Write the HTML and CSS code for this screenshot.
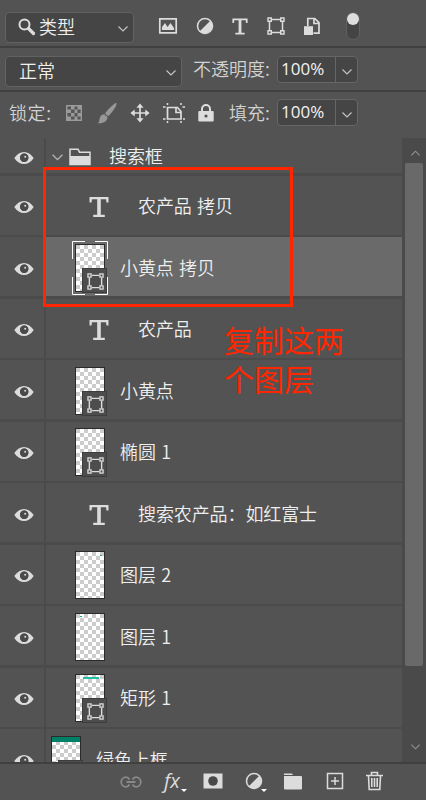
FILE: index.html
```html
<!DOCTYPE html>
<html lang="zh-CN">
<head>
<meta charset="utf-8">
<title>图层</title>
<link rel="stylesheet" href="styles.css">
</head>
<body>
<svg class="defs" width="0" height="0">
  <symbol id="eye" viewBox="0 0 20 14"><path fill="#dcdcdc" fill-rule="evenodd" d="M.3 7C3 3 6.300 1 10 1s7 2 9.700 6C17 11 13.700 13 10 13S3 11 .3 7Zm5.700-.3a4.200 4.200 0 1 0 8.400 0 4.200 4.200 0 1 0-8.400 0Z"/><circle cx="10.200" cy="6.800" r="4.200" fill="#4a4a4a"/><circle cx="11.200" cy="5.700" r="1" fill="#ddd"/></symbol>
  <symbol id="type" viewBox="0 0 20 20"><path fill="#dcdcdc" d="M.5 0h19v5.500h-2L17 2.300h-5.200v15.500h4V20H4.200v-2.200h4V2.300H3L2.500 5.500h-2Z"/></symbol>
  <symbol id="shape" viewBox="0 0 18 18"><g fill="none" stroke="#dcdcdc"><path stroke-width="1.500" d="M5 2.500h8M5 15.500h8M2.500 5v8M15.500 5v8"/><path stroke-width="1.400" d="M1 1h3.300v3.300H1zM13.700 1H17v3.300h-3.300zM1 13.700h3.300V17H1zM13.700 13.700H17V17h-3.300z"/></g></symbol>
  <symbol id="half" viewBox="0 0 18 18"><circle cx="9" cy="9" r="7.500" fill="none" stroke="#d8d8d8" stroke-width="1.600"/><path fill="#dcdcdc" d="M14.500 3.500A7.800 7.800 0 0 1 3.500 14.500Z"/></symbol>
  <symbol id="chev" viewBox="0 0 12 8"><path d="M1.500 1.500 6 6l4.500-4.500" fill="none" stroke="currentColor" stroke-width="1.200"/></symbol>
</svg>

<div class="panel">
  <div class="bar filter">
    <div class="select kind">
      <svg class="search" viewBox="0 0 18 18"><circle cx="6.500" cy="6.500" r="5" fill="none" stroke="#dcdcdc" stroke-width="2"/><path d="m10.500 10.500 5 5" stroke="#dcdcdc" stroke-width="3.200" stroke-linecap="round"/></svg>
      <span>类型</span><svg class="chev"><use href="#chev"/></svg>
    </div>
    <div class="filters">
      <svg class="i20" viewBox="0 0 20 20"><path d="M1.800 2.800h16.400v14H1.800z" fill="none" stroke="#dcdcdc" stroke-width="1.700"/><path d="M4 14v-3l3-4 2.500 4 3-4L16 12v2Z" fill="#dcdcdc"/></svg>
      <svg class="i18"><use href="#half"/></svg>
      <svg class="t16"><use href="#type"/></svg>
      <svg class="i18"><use href="#shape"/></svg>
      <svg class="i18" viewBox="0 0 18 18"><path d="M4.800 9V1.500h7L16 5.700v10.500h-5.500M11 2v4.500h5" fill="none" stroke="#dcdcdc" stroke-width="1.700"/><path d="M1 9.200h9V18H1z" fill="#dcdcdc"/></svg>
    </div>
    <div class="toggle"><i></i></div>
  </div>

  <div class="bar blend">
    <div class="select mode"><span>正常</span><svg class="chev"><use href="#chev"/></svg></div>
    <span class="label opacity">不透明度:</span>
    <div class="number"><b>100%</b><i><svg class="chev"><use href="#chev"/></svg></i></div>
  </div>

  <div class="bar locks">
    <span class="label lock">锁定:</span>
    <div class="lockicons">
      <svg class="i18" viewBox="0 0 18 18"><path d="M1.700 1.700h14.600v14.600H1.700z" fill="#555" stroke="#9a9a9a" stroke-width="1.400"/><path fill="#9a9a9a" d="M6 2h3.500v3.500H6zM12.500 2H16v3.500h-3.500zM2 5.500h4V9H2zM9.500 5.500h3V9h-3zM6 9h3.500v3.500H6zM12.500 9H16v3.500h-3.500zM2 12.500h4V16H2zM9.500 12.500h3V16h-3z"/></svg>
      <svg class="i22" viewBox="0 0 22 22"><path fill="#989898" d="M20.500.7c.6 3-4.500 10-8.200 13.500L9 11.500C12 7.500 17.500 1.600 20.500.7ZM8.200 12.300l3.300 2.800c.2 4-4 6.700-10 6.200 2.500-1.300 1.500-3.500 2.500-6 .7-2 2.500-3 4.200-3Z"/></svg>
      <svg class="i20" viewBox="0 0 20 20"><path d="M10 3v14M3 10h14" stroke="#ddd" stroke-width="1.700"/><path fill="#ddd" d="m10 .4 3.600 4.300H6.400ZM10 19.600l3.600-4.300H6.400ZM.4 10l4.300-3.600v7.200ZM19.600 10l-4.300-3.600v7.200Z"/></svg>
      <svg class="i22" viewBox="0 0 22 20"><path d="M4.500 4.500h10l3.500 4v7.500H4.500ZM13 4.500v5h5" fill="none" stroke="#ddd" stroke-width="1.700"/><path d="M4.500 0v2M4.500 18v2M18 0v2M18 18v2M0 4h2.500M0 16h2.500M19.500 4H22M20 16h2" stroke="#ddd" stroke-width="1.500"/></svg>
      <svg class="i18" viewBox="0 0 18 18"><path d="M5 8V5a4 4 0 0 1 8 0v3" fill="none" stroke="#ddd" stroke-width="2"/><rect x="1.300" y="7" width="15.400" height="10.500" rx="1" fill="#ddd"/><circle cx="9" cy="12" r="1.600" fill="#505050"/></svg>
    </div>
    <span class="label fill">填充:</span>
    <div class="number"><b>100%</b><i><svg class="chev"><use href="#chev"/></svg></i></div>
  </div>

  <div class="body">
    <div class="layers">
      <div class="row group"><div class="vis"><svg><use href="#eye"/></svg></div><div class="cell"><svg class="open"><use href="#chev"/></svg><svg class="folder" viewBox="0 0 22 18"><path d="M1 16.500V1.200h8l1.500 3h10.500v12.300Z" fill="none" stroke="#dcdcdc" stroke-width="1.500"/><path d="M1 8h20v8.800H1z" fill="#dcdcdc"/></svg><span class="name">搜索框</span></div></div>
      <div class="row"><div class="vis"><svg><use href="#eye"/></svg></div><div class="cell text"><svg><use href="#type"/></svg><span class="name">农产品 拷贝</span></div></div>
      <div class="row selected"><div class="vis"><svg><use href="#eye"/></svg></div><div class="cell"><div class="thumb"><svg class="corners" viewBox="0 0 36 54"><path d="M.5 18V.5H13M23 .5h12.500V18M35.500 36v17.500H23M13 53.500H.5V36" fill="none" stroke="#fff"/></svg><div class="badge"><svg><use href="#shape"/></svg></div></div><span class="name">小黄点 拷贝</span></div></div>
      <div class="row"><div class="vis"><svg><use href="#eye"/></svg></div><div class="cell text"><svg><use href="#type"/></svg><span class="name">农产品</span></div></div>
      <div class="row"><div class="vis"><svg><use href="#eye"/></svg></div><div class="cell"><div class="thumb"><div class="badge"><svg><use href="#shape"/></svg></div></div><span class="name">小黄点</span></div></div>
      <div class="row"><div class="vis"><svg><use href="#eye"/></svg></div><div class="cell"><div class="thumb"><i class="ink dot"></i><div class="badge"><svg><use href="#shape"/></svg></div></div><span class="name">椭圆 1</span></div></div>
      <div class="row"><div class="vis"><svg><use href="#eye"/></svg></div><div class="cell text"><svg><use href="#type"/></svg><span class="name">搜索农产品：如红富士</span></div></div>
      <div class="row"><div class="vis"><svg><use href="#eye"/></svg></div><div class="cell"><div class="thumb"><i class="ink right"></i></div><span class="name">图层 2</span></div></div>
      <div class="row"><div class="vis"><svg><use href="#eye"/></svg></div><div class="cell"><div class="thumb"><i class="ink left"></i></div><span class="name">图层 1</span></div></div>
      <div class="row"><div class="vis"><svg><use href="#eye"/></svg></div><div class="cell"><div class="thumb"><i class="ink strip"></i><div class="badge"><svg><use href="#shape"/></svg></div></div><span class="name">矩形 1</span></div></div>
      <div class="row"><div class="vis"><svg><use href="#eye"/></svg></div><div class="cell outer"><div class="thumb"><i class="ink banner"></i><div class="badge"><svg><use href="#shape"/></svg></div></div><span class="name">绿色上框</span></div></div>
    </div>
    <div class="scroll"><svg class="up"><use href="#chev"/></svg><div class="handle"></div><svg class="down"><use href="#chev"/></svg></div>
  </div>

  <div class="footer">
    <svg class="link" viewBox="0 0 22 12"><path d="M9.500 3.500C8.500 1.800 7.500 1.200 6 1.200a4.800 4.800 0 0 0 0 9.600c1.500 0 2.500-.6 3.500-2.300M12.500 3.500c1-1.700 2-2.300 3.500-2.300a4.800 4.800 0 0 1 0 9.600c-1.500 0-2.500-.6-3.500-2.300M6.500 6h9" fill="none" stroke="#8a8a8a" stroke-width="1.800"/></svg>
    <span class="fx">fx<i class="more"></i></span>
    <svg class="mask" viewBox="0 0 20 16"><path d="M.5.500h19v15H.5z" fill="#dcdcdc"/><circle cx="10" cy="8" r="4.800" fill="#4a4a4a"/></svg>
    <span class="adjust"><svg class="i18"><use href="#half"/></svg><i class="more"></i></span>
    <svg class="dir" viewBox="0 0 18 17"><path fill="#dcdcdc" d="M0 .5h8l1 1.500H0zM0 3h17q1 0 1 1v11.500q0 1-1 1H1q-1 0-1-1z"/></svg>
    <svg class="i18 add" viewBox="0 0 18 18"><path d="M1.500 1.500h15v15h-15zM9 5v8M5 9h8" fill="none" stroke="#dcdcdc" stroke-width="1.500"/></svg>
    <svg class="trash" viewBox="0 0 17 20"><path d="M0 4.500h17M5.500 4V1.500h6V4M2.500 5l.7 13.500h10.600L14.500 5M5.800 7v9M8.500 7v9M11.200 7v9" fill="none" stroke="#dcdcdc" stroke-width="1.600"/></svg>
  </div>

  <div class="frame"></div>
  <div class="note">复制这两<br>个图层</div>
</div>
</body>
</html>
```
FILE: styles.css
```css
* { box-sizing: border-box; }
body {
  margin: 0;
  background: #535353;
  color: #efefef;
  font: 350 18px/24px "Noto Sans CJK SC", "Noto Sans", sans-serif;
}
.defs { position: absolute; }
svg { display: block; flex: none; overflow: visible; }
i, b { font-style: normal; font-weight: 400; }
.panel {
  position: relative;
  display: flex;
  flex-direction: column;
  width: 426px;
  height: 800px;
  overflow: hidden;
  background: #535353;
}
.i18 { width: 18px; height: 18px; }
.i20 { width: 20px; height: 20px; }
.i22 { width: 22px; height: 22px; }
.t16 { width: 16px; height: 17px; }
.chev { width: 12px; height: 8px; color: #c4c4c4; }

/* option bars */
.bar { display: flex; flex: none; align-items: flex-start; white-space: nowrap; }
.filter { height: 48px; padding: 12px 0 0 5px; border-bottom: 2px solid #404040; }
.blend { height: 44px; padding: 8px 0 0 5px; border-bottom: 2px solid #404040; }
.locks { height: 46px; padding: 7px 0 0 10px; }
.select {
  display: flex;
  align-items: center;
  height: 31px;
  background: #454545;
  border: 1px solid #626262;
  border-radius: 4px;
}
.select .chev { margin: 3px 4px 0 auto; }
.kind { width: 129px; padding-left: 12px; }
.kind span { margin: -3px 0 0 3px; }
.search { width: 18px; height: 18px; margin-top: -1px; }
.mode { width: 177px; padding-left: 13px; }
.mode span { margin-top: -3px; }
.filters {
  display: flex;
  align-items: center;
  justify-content: space-between;
  width: 164px;
  height: 28px;
  margin-left: 24px;
}
.filters .i18, .filters .t16 { margin-left: -2px; margin-right: 1px; }
.toggle {
  width: 14px;
  height: 28px;
  margin: 0 0 0 24px;
  background: #444;
  border: 1px solid #606060;
  border-radius: 7px;
}
.toggle i { display: block; width: 12px; height: 12px; border-radius: 50%; background: #dedede; }
.label { color: #d2d2d2; }
.opacity { margin-left: 11px; width: 84px; }
.locks .label { margin-top: 1px; }
.lock { width: 56px; margin-left: -1px; letter-spacing: .6px; }
.lockicons {
  display: flex;
  align-items: center;
  justify-content: space-between;
  width: 150px;
  height: 28px;
}
.fill { width: 48px; margin-left: 14px; }
.number {
  display: flex;
  width: 81px;
  height: 27px;
  background: #454545;
  border: 1px solid #666;
  border-radius: 4px;
}
.number b { width: 57px; padding-left: 3px; font: 17px/24px "Open Sans", sans-serif; color: #f2f2f2; }
.number i { display: flex; flex: 1; align-items: center; justify-content: center; padding-top: 4px; border-left: 1px solid #666; }

/* layer list */
.body { display: flex; flex: none; height: 624px; overflow: hidden; }
.layers { width: 402px; }
.row { display: flex; height: 61px; border-bottom: 2px solid #4b4b4b; }
.row:nth-child(odd) { height: 62px; border-bottom-width: 3px; }
.row.group { height: 38px; }
.vis { width: 46px; padding: 24px 0 0 14px; border-right: 2px solid #4b4b4b; }
.row:nth-child(odd) .vis { padding-top: 25px; }
.row.group .vis { padding-top: 13px; }
.vis svg { width: 20px; height: 14px; margin-left: -.5px; }
.cell { display: flex; flex: 1; align-items: flex-start; padding: 6px 0 0 29px; }
.row:nth-child(odd) .cell { padding-top: 7px; }
.name { margin: 11px 0 0 15px; white-space: nowrap; word-spacing: 1.500px; letter-spacing: -.1px; }
.cell.text { padding-left: 43px; }
.text > svg { width: 20px; height: 20px; margin-top: 15px; }
.text .name { margin-left: 29px; }
.cell.outer { padding-left: 5px; }
.row.group .cell { padding: 0 0 0 5px; }
.open { width: 13px; height: 9px; margin-top: 15px; color: #b5b5b5; }
.folder { width: 22px; height: 18px; margin: 10px 0 0 5px; }
.group .name { margin: 5px 0 0 18px; }
.selected .cell { background: #6a6a6a; }
.thumb {
  position: relative;
  flex: none;
  width: 30px;
  height: 48px;
  border: 1px solid #2b2b2b;
  background: repeating-conic-gradient(#fff 0 25%, #ccc 0 50%) 0 0 / 8px 8px;
}
.badge {
  position: absolute;
  left: 6px;
  top: 23px;
  width: 25px;
  height: 25px;
  padding: 4px;
  background: #4d4d4d;
  border: 1px solid #3d3d3d;
}
.badge svg { width: 17px; height: 17px; margin-left: -.5px; }
.corners { position: absolute; left: -4px; top: -4px; width: 36px; height: 54px; }
.ink { position: absolute; background: #18a98a; height: 1px; }
.dot { left: 5px; top: 5px; width: 1px; background: #c4c850; }
.right { left: 24px; top: 3px; width: 2px; }
.left { left: 4px; top: 2px; width: 2px; }
.strip { left: 7px; top: 2px; width: 16px; height: 2px; background: #24bda4; }
.banner { left: 0; top: 0; width: 28px; height: 5px; background: #008066; }

.scroll { display: flex; flex-direction: column; width: 24px; background: #4a4a4a; }
.up, .down { width: 11px; height: 8px; margin-left: 8px; color: #939393; }
.up { margin-top: 11px; transform: rotate(180deg); }
.handle { width: 18px; height: 503px; margin: 6px 0 0 3px; background: #696969; border-radius: 2px; }
.down { margin-top: 77px; }

/* footer tools */
.footer { display: flex; flex: none; height: 38px; padding: 8px 0 0 120px; border-top: 2px solid #404040; }
.link { width: 22px; height: 12px; margin-top: 4px; }
.fx { position: relative; width: 24px; margin: -3px 0 0 22px; font: italic 400 20px/24px "Open Sans", sans-serif; color: #dcdcdc; }
.more { position: absolute; border: 3px solid transparent; border-top-color: #fff; border-bottom: 0; }
.fx .more { left: 17px; top: 20px; }
.mask { width: 20px; height: 16px; margin: 1px 0 0 15px; }
.adjust { position: relative; margin: 0 0 0 22px; }
.adjust .more { left: 16px; top: 17px; }
.dir { width: 18px; height: 17px; margin: 1px 0 0 21px; }
.add { margin-left: 24px; }
.trash { width: 17px; height: 20px; margin: -1px 0 0 22px; }

/* annotation over the panel */
.frame { position: absolute; left: 43px; top: 167px; width: 250px; height: 140px; border: 3px solid #ff2600; }
.note { position: absolute; left: 224px; top: 320px; font-size: 30px; font-weight: 400; line-height: 39px; color: #ff2600; white-space: nowrap; }
```
